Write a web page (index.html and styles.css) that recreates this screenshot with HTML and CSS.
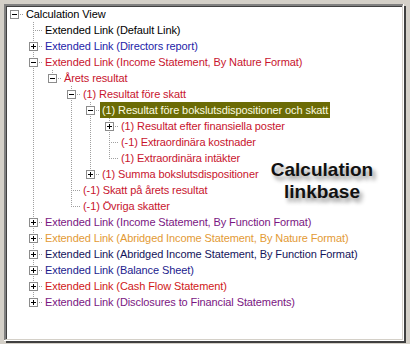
FILE: index.html
```html
<!DOCTYPE html>
<html>
<head>
<meta charset="utf-8">
<title>Calculation View</title>
<link rel="stylesheet" href="styles.css">
</head>
<body>
<div class="frame">
  <ul class="tree">
    <li><div class="row"><span class="tw"><i class="box minus"></i></span><span class="lbl">Calculation View</span></div>
      <ul>
        <li><div class="row"><span class="tw"></span><span class="lbl">Extended Link (Default Link)</span></div></li>
        <li><div class="row"><span class="tw"><i class="box plus"></i></span><span class="lbl c-blue">Extended Link (Directors report)</span></div></li>
        <li><div class="row"><span class="tw"><i class="box minus"></i></span><span class="lbl c-red">Extended Link (Income Statement, By Nature Format)</span></div>
          <ul>
            <li><div class="row"><span class="tw"><i class="box minus"></i></span><span class="lbl c-red">Årets resultat</span></div>
              <ul>
                <li><div class="row"><span class="tw"><i class="box minus"></i></span><span class="lbl c-red">(1) Resultat före skatt</span></div>
                  <ul>
                    <li><div class="row"><span class="tw"><i class="box minus"></i></span><span class="lbl sel">(1) Resultat före bokslutsdispositioner och skatt</span></div>
                      <ul>
                        <li><div class="row"><span class="tw"><i class="box plus"></i></span><span class="lbl c-red">(1) Resultat efter finansiella poster</span></div></li>
                        <li><div class="row"><span class="tw"></span><span class="lbl c-red">(-1) Extraordinära kostnader</span></div></li>
                        <li><div class="row"><span class="tw"></span><span class="lbl c-red">(1) Extraordinära intäkter</span></div></li>
                      </ul>
                    </li>
                    <li><div class="row"><span class="tw"><i class="box plus"></i></span><span class="lbl c-red">(1) Summa bokslutsdispositioner</span></div></li>
                  </ul>
                </li>
                <li><div class="row"><span class="tw"></span><span class="lbl c-red">(-1) Skatt på årets resultat</span></div></li>
                <li><div class="row"><span class="tw"></span><span class="lbl c-red">(-1) Övriga skatter</span></div></li>
              </ul>
            </li>
          </ul>
        </li>
        <li><div class="row"><span class="tw"><i class="box plus"></i></span><span class="lbl c-purple">Extended Link (Income Statement, By Function Format)</span></div></li>
        <li><div class="row"><span class="tw"><i class="box plus"></i></span><span class="lbl c-orange">Extended Link (Abridged Income Statement, By Nature Format)</span></div></li>
        <li><div class="row"><span class="tw"><i class="box plus"></i></span><span class="lbl c-navy">Extended Link (Abridged Income Statement, By Function Format)</span></div></li>
        <li><div class="row"><span class="tw"><i class="box plus"></i></span><span class="lbl c-blue2">Extended Link (Balance Sheet)</span></div></li>
        <li><div class="row"><span class="tw"><i class="box plus"></i></span><span class="lbl c-red2">Extended Link (Cash Flow Statement)</span></div></li>
        <li><div class="row"><span class="tw"><i class="box plus"></i></span><span class="lbl c-purple">Extended Link (Disclosures to Financial Statements)</span></div></li>
      </ul>
    </li>
  </ul>
  <div class="stamp">Calculation<br>linkbase</div>
</div>
</body>
</html>
```
FILE: styles.css
```css
html,body{margin:0;padding:0;}
body{background:#d4d0c8;width:410px;height:344px;overflow:hidden;font-family:"Liberation Sans",Arial,sans-serif;font-size:11px;letter-spacing:-0.1px;}
.frame{position:relative;box-sizing:border-box;margin:4px 0 0 4px;width:400px;height:337px;background:#fff;
	border-style:solid;border-width:2px;border-color:#808080 #d4d0c8 #d4d0c8 #808080;
	box-shadow:inset 1px 1px 0 #404040,2px 2px 0 #404040;}
.frame::after{content:"";position:absolute;right:-2px;bottom:-2px;left:-2px;top:-2px;pointer-events:none;
	border-right:1px solid #fff;border-bottom:1px solid #fff;}

.tree,.tree ul{list-style:none;margin:0;padding:0;}
.tree ul{margin-left:19px;}
.tree li{position:relative;}
.tree ul>li::before{content:"";position:absolute;left:8px;top:0;bottom:0;width:1px;
	background:linear-gradient(to bottom,#a0a0a0 50%,transparent 50%);background-size:1px 2px;}
.tree ul>li:last-child::before{bottom:auto;height:9px;}

.row{position:relative;display:flex;align-items:center;height:16px;white-space:nowrap;}
.row::before{content:"";position:absolute;left:9px;top:8px;width:9px;height:1px;
	background:linear-gradient(to right,transparent 50%,#a0a0a0 50%);background-size:2px 1px;}
.tw{position:relative;flex:none;width:18px;height:16px;}
.box{position:absolute;left:4px;top:4px;width:7px;height:7px;border:1px solid #8c8c8c;background:#fff;z-index:1;}
.box::before{content:"";position:absolute;left:1px;top:3px;width:5px;height:1px;background:#000;}
.box.plus::after{content:"";position:absolute;left:3px;top:1px;width:1px;height:5px;background:#000;}

.lbl{padding:0 2px;line-height:16px;height:16px;color:#000;}
.lbl.sel{background:#6b6b05;color:#fbfbe0;}
.c-blue{color:#2323a8;}
.c-blue2{color:#1c1c8e;}
.c-red{color:#c8142e;}
.c-red2{color:#d01818;}
.c-purple{color:#7a1682;}
.c-orange{color:#e39a35;}
.c-navy{color:#14145a;}

.stamp{position:absolute;left:256px;top:153px;width:120px;text-align:center;letter-spacing:0;
	font:bold 19px/22px "Liberation Sans",Arial,sans-serif;color:#111;
	text-shadow:3px 4px 4px rgba(0,0,0,.45);}
```
